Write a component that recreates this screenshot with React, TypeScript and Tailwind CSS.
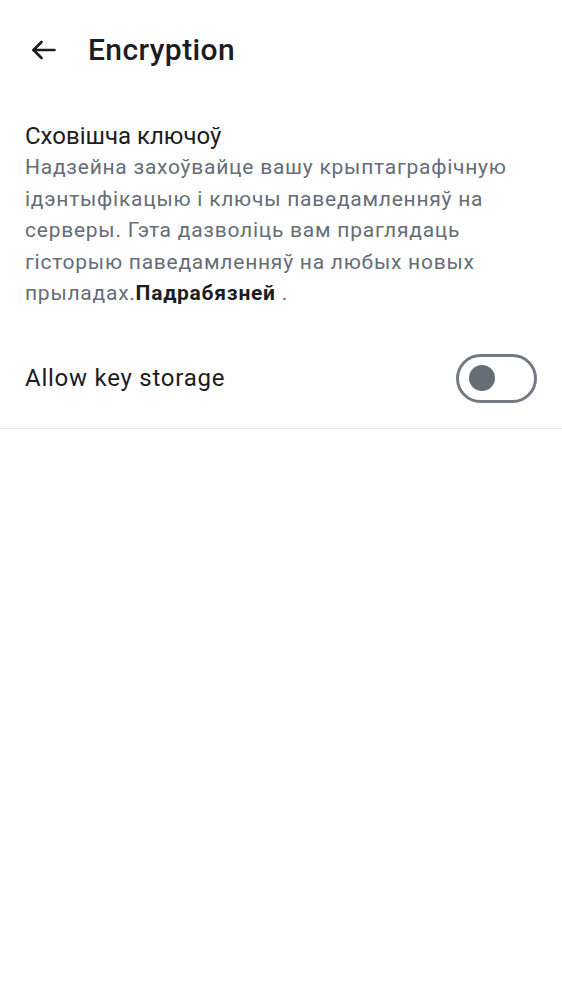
import React from "react";

export default function App() {
  return (
    <div className="w-[562px] h-[1000px] bg-white" style={{ fontFamily: "Roboto, 'Noto Sans', sans-serif" }}>
      <div className="flex items-center h-[100px] pl-[31px]">
        <svg width="25" height="20" viewBox="0 0 25 20" fill="none" stroke="#1b1d22" strokeWidth="2.6" strokeLinecap="round" strokeLinejoin="round">
          <path d="M23.5 10H2.5" />
          <path d="M10.5 2L2.5 10L10.5 18" />
        </svg>
        <div className="ml-[32px] text-[30px] font-medium tracking-[0.4px] text-[#1b1d22] leading-none">Encryption</div>
      </div>
      <div className="px-[25px] pt-[21px]">
        <div className="text-[24px] leading-[30px] text-[#1b1d22]">Сховішча ключоў</div>
        <div className="text-[21px] leading-[31.5px] tracking-[0.75px] text-[#656d77] mt-[1px]">
          Надзейна захоўвайце вашу крыптаграфічную<br />ідэнтыфікацыю і ключы паведамленняў на<br />серверы. Гэта дазволіць вам праглядаць<br />гісторыю паведамленняў на любых новых<br />прыладах.<span className="font-bold text-[#1b1d22]">Падрабязней</span> .
        </div>
      </div>
      <div className="flex items-center justify-between pl-[25px] pr-[25px] mt-[19px] h-[100px] border-b border-[#e6e7ea]">
        <div className="text-[24px] tracking-[0.75px] text-[#1b1d22]">Allow key storage</div>
        <div className="w-[81px] h-[49px] rounded-full border-[3px] border-[#737a84] flex items-center pl-[10px]">
          <div className="w-[26px] h-[26px] rounded-full bg-[#656d77]" />
        </div>
      </div>
    </div>
  );
}
